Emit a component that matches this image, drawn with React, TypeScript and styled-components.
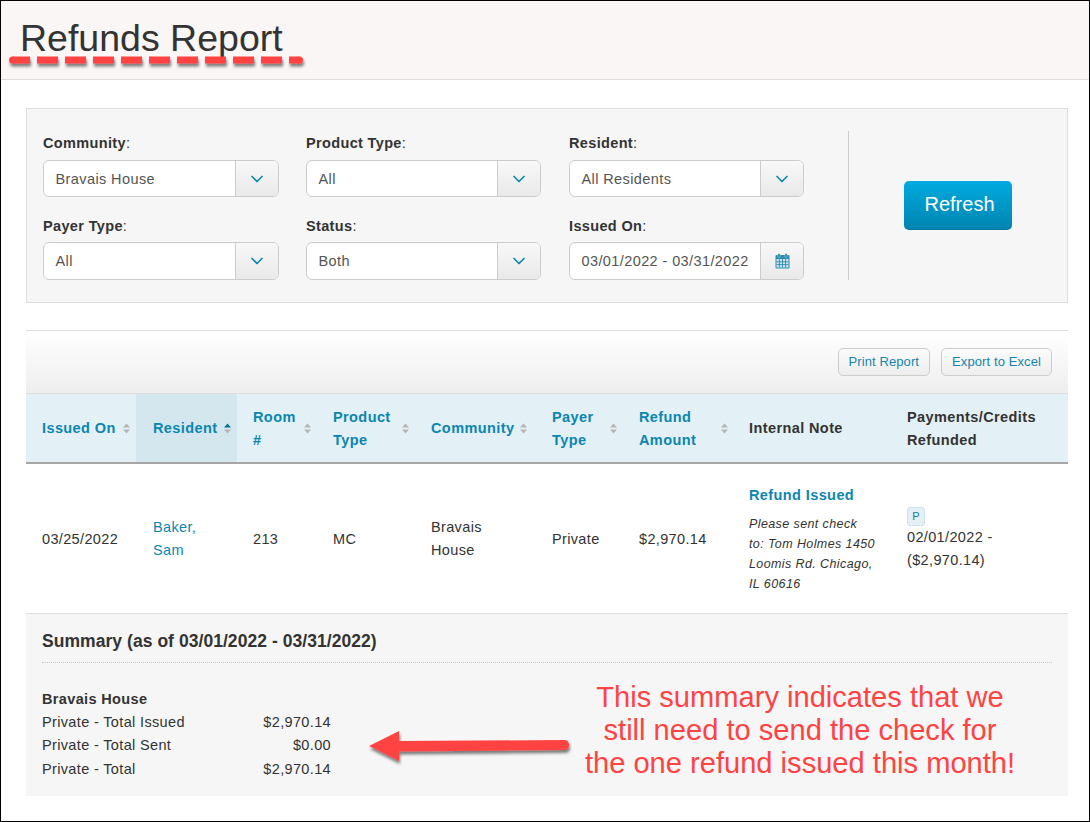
import React from "react";
import styled, { createGlobalStyle } from "styled-components";
import { ChevronDown } from "lucide-react";

const Global = createGlobalStyle`
  html, body { margin: 0; padding: 0; background: #fff; }
  * { box-sizing: border-box; }
`;

const Page = styled.div`
  position: relative;
  width: 1090px;
  height: 822px;
  border: 1px solid #000;
  background: #fff;
  overflow: hidden;
  font-family: "Liberation Sans", Arial, sans-serif;
  font-size: 14.5px;
  letter-spacing: 0.35px;
  color: #333;
`;

const Header = styled.header`
  height: 79px;
  background: #f9f6f5;
  border-bottom: 1px solid #ddd;
  padding: 15px 0 0 19px;
`;

const Title = styled.h1`
  margin: 0;
  font-size: 37.5px;
  line-height: 44px;
  font-weight: 400;
  letter-spacing: 0;
  color: #333;
`;

const Content = styled.main`
  padding: 28px 21px 0 25px;
`;

const FilterPanel = styled.section`
  display: flex;
  height: 195px;
  background: #f6f6f6;
  border: 1px solid #ddd;
  padding: 22px 0 22px 16px;
`;

const FilterGrid = styled.div`
  display: grid;
  grid-template-columns: repeat(3, 235px);
  grid-template-rows: 82px 82px;
  column-gap: 28px;
  width: 805px;
  flex: none;
`;

const Field = styled.div<{ $lower?: boolean }>`
  display: flex;
  flex-direction: column;
  padding-top: ${(p) => (p.$lower ? 1 : 0)}px;
  &:nth-child(3n + 1) {
    margin-right: -1px;
  }
`;

const Label = styled.label<{ $lower?: boolean }>`
  height: ${(p) => (p.$lower ? 28 : 29)}px;
  padding-top: 3px;
  line-height: 18px;
  color: #333;
  b { font-weight: 700; }
`;

const Control = styled.div<{ $lower?: boolean }>`
  display: flex;
  height: ${(p) => (p.$lower ? 38 : 37)}px;
  background: #fff;
  border: 1px solid #ccc;
  border-radius: 6px;
  overflow: hidden;
`;

const ControlValue = styled.span`
  flex: 1;
  padding-left: 11.5px;
  line-height: 36px;
  letter-spacing: 0.4px;
  color: #555;
  white-space: nowrap;
`;

const AddOn = styled.span`
  flex: none;
  width: 43px;
  display: flex;
  align-items: center;
  justify-content: center;
  border-left: 1px solid #ccc;
  background: linear-gradient(#f8f8f8, #e9e9e9);
  color: #0b86b1;
`;

const RefreshZone = styled.div`
  flex: 1;
  display: flex;
  align-items: center;
  justify-content: center;
  border-left: 1px solid #ccc;
`;

const RefreshButton = styled.button`
  width: 108px;
  height: 49px;
  padding: 0 0 2px 3px;
  border: 0;
  border-bottom: 1px solid #00779f;
  border-radius: 5px;
  background: linear-gradient(#00aadf, #0085b1);
  color: #fff;
  font-family: inherit;
  font-size: 20px;
  letter-spacing: 0;
`;

const Report = styled.section`
  margin-top: 27px;
`;

const Toolbar = styled.div`
  display: flex;
  justify-content: flex-end;
  gap: 11px;
  height: 64px;
  padding: 17px 16px 0 0;
  border-top: 1px solid #ddd;
  border-bottom: 1px solid #ddd;
  background: linear-gradient(#fff, #eeeeee);
`;

const ToolButton = styled.button`
  height: 28px;
  padding: 0 10px 2px;
  border: 1px solid #ccc;
  border-radius: 5px;
  background: linear-gradient(#fbfbfb, #eeeeee);
  color: #1585ad;
  font-family: inherit;
  font-size: 13px;
  letter-spacing: 0.1px;
`;

const Table = styled.table`
  width: 1042px;
  table-layout: fixed;
  border-collapse: collapse;
`;

const HeadCell = styled.th<{ $active?: boolean; $plain?: boolean }>`
  height: 69px;
  padding: 1px 0 0 ${(p) => (p.$active ? 17 : 16)}px;
  background: ${(p) => (p.$active ? "#d4e7ef" : "#e3f0f5")};
  border-bottom: 2px solid #a6a6a6;
  text-align: left;
  font-size: 14.5px;
  line-height: 23px;
  font-weight: 700;
  letter-spacing: 0.4px;
  color: ${(p) => (p.$plain ? "#333" : "#0b86b1")};
`;

const HeadInner = styled.div<{ $inset?: number }>`
  display: flex;
  align-items: center;
  justify-content: space-between;
  padding-right: ${(p) => p.$inset ?? 5}px;
`;

const BodyCell = styled.td<{ $indent?: boolean }>`
  height: 150px;
  padding: 2px 10px 0 ${(p) => (p.$indent ? 17 : 16)}px;
  border-bottom: 1px solid #ddd;
  line-height: 23px;
  vertical-align: middle;
`;

const ResidentLink = styled.a`
  color: #0b86b1;
`;

const NoteTitle = styled.div`
  font-weight: 700;
  letter-spacing: 0.4px;
  color: #0b86b1;
  line-height: 20px;
`;

const NoteText = styled.div`
  font-style: italic;
  font-size: 12.5px;
  line-height: 20px;
  margin-top: 9px;
  letter-spacing: 0.4px;
`;

const Badge = styled.span`
  display: block;
  width: 18px;
  height: 19px;
  background: #e3f0f5;
  border: 1px solid #cbe3ea;
  border-radius: 3px;
  text-align: center;
  font-size: 11px;
  line-height: 16px;
  color: #1b7d9f;
  letter-spacing: 0;
`;

const Summary = styled.section`
  height: 182px;
  background: #f6f6f6;
  padding: 15px 16px 0;
`;

const SummaryTitle = styled.h2`
  margin: 0;
  height: 34px;
  border-bottom: 1px dotted #c8c8c8;
  font-size: 17.5px;
  line-height: 24px;
  font-weight: 700;
  letter-spacing: 0.05px;
`;

const SummaryName = styled.div`
  margin-top: 25px;
  font-weight: 700;
  line-height: 23px;
`;

const SummaryRow = styled.div`
  display: flex;
  justify-content: space-between;
  width: 289px;
  line-height: 23.5px;
`;

const Callout = styled.p`
  position: absolute;
  left: 569px;
  top: 680px;
  width: 460px;
  margin: 0;
  text-align: center;
  color: #ff4343;
  font-size: 29.1px;
  line-height: 33px;
  letter-spacing: 0;
`;

const Overlay = styled.svg`
  position: absolute;
  left: -1px;
  top: -1px;
  pointer-events: none;
  overflow: visible;
`;

const SortIcon = ({ active }: { active?: boolean }) => (
  <svg width="9" height="11" viewBox="0 0 9 11" style={{ flex: "none" }}>
    <path d="M4.5 0.5 8 4.4H1z" fill={active ? "#0f6f92" : "#b5b5b5"} />
    <path d="M4.5 10.5 8 6.6H1z" fill="#b5b5b5" />
  </svg>
);

const CalendarIcon = () => (
  <svg width="15" height="16" viewBox="0 0 15 16">
    <rect x="0.5" y="2" width="14" height="13.5" rx="1" fill="#2a8db3" />
    <rect x="1.5" y="6" width="12" height="8.5" fill="#cfe4ec" />
    <path d="M1.5 8.8h12M1.5 11.6h12M4.4 6v8.5M7.5 6v8.5M10.6 6v8.5" stroke="#2a8db3" strokeWidth="0.9" />
    <rect x="3" y="0.5" width="2" height="4" rx="1" fill="#0f6f92" stroke="#e9e9e9" strokeWidth="0.5" />
    <rect x="10" y="0.5" width="2" height="4" rx="1" fill="#0f6f92" stroke="#e9e9e9" strokeWidth="0.5" />
  </svg>
);

const selects = [
  { label: "Community", value: "Bravais House" },
  { label: "Product Type", value: "All" },
  { label: "Resident", value: "All Residents" },
  { label: "Payer Type", value: "All", lower: true },
  { label: "Status", value: "Both", lower: true },
  { label: "Issued On", value: "03/01/2022 - 03/31/2022", date: true, lower: true },
];

const columns: { w: number; t: React.ReactNode; sort?: boolean; active?: boolean; inset?: number }[] = [
  { w: 110, t: "Issued On", sort: true },
  { w: 101, t: "Resident", sort: true, active: true },
  { w: 80, t: <>Room<br />#</>, sort: true },
  { w: 98, t: <>Product<br />Type</>, sort: true },
  { w: 121, t: "Community", sort: true, inset: 8 },
  { w: 87, t: <>Payer<br />Type</>, sort: true },
  { w: 110, t: <>Refund<br />Amount</>, sort: true, inset: 4 },
  { w: 158, t: "Internal Note" },
  { w: 177, t: <>Payments/Credits<br />Refunded</> },
];

export default function App() {
  return (
    <Page>
      <Global />
      <Header>
        <Title>Refunds Report</Title>
      </Header>
      <Content>
        <FilterPanel>
          <FilterGrid>
            {selects.map((s) => (
              <Field key={s.label} $lower={s.lower}>
                <Label $lower={s.lower}>
                  <b>{s.label}</b>:
                </Label>
                <Control $lower={s.lower}>
                  <ControlValue>{s.value}</ControlValue>
                  <AddOn>
                    {s.date ? <CalendarIcon /> : <ChevronDown size={20} strokeWidth={2} />}
                  </AddOn>
                </Control>
              </Field>
            ))}
          </FilterGrid>
          <RefreshZone>
            <RefreshButton>Refresh</RefreshButton>
          </RefreshZone>
        </FilterPanel>
        <Report>
          <Toolbar>
            <ToolButton>Print Report</ToolButton>
            <ToolButton>Export to Excel</ToolButton>
          </Toolbar>
          <Table>
            <colgroup>
              {columns.map((c, i) => (
                <col key={i} style={{ width: c.w }} />
              ))}
            </colgroup>
            <thead>
              <tr>
                {columns.map((c, i) => (
                  <HeadCell key={i} $active={c.active} $plain={!c.sort}>
                    <HeadInner $inset={c.inset}>
                      <span>{c.t}</span>
                      {c.sort && <SortIcon active={c.active} />}
                    </HeadInner>
                  </HeadCell>
                ))}
              </tr>
            </thead>
            <tbody>
              <tr>
                <BodyCell>03/25/2022</BodyCell>
                <BodyCell $indent><ResidentLink>Baker,<br />Sam</ResidentLink></BodyCell>
                <BodyCell>213</BodyCell>
                <BodyCell>MC</BodyCell>
                <BodyCell>Bravais<br />House</BodyCell>
                <BodyCell>Private</BodyCell>
                <BodyCell>$2,970.14</BodyCell>
                <BodyCell>
                  <NoteTitle>Refund Issued</NoteTitle>
                  <NoteText>
                    Please sent check<br />to: Tom Holmes 1450<br />Loomis Rd. Chicago,<br />IL 60616
                  </NoteText>
                </BodyCell>
                <BodyCell>
                  <Badge>P</Badge>
                  02/01/2022 -<br />($2,970.14)
                </BodyCell>
              </tr>
            </tbody>
          </Table>
          <Summary>
            <SummaryTitle>Summary (as of 03/01/2022 - 03/31/2022)</SummaryTitle>
            <SummaryName>Bravais House</SummaryName>
            <SummaryRow><span>Private - Total Issued</span><span>$2,970.14</span></SummaryRow>
            <SummaryRow><span>Private - Total Sent</span><span>$0.00</span></SummaryRow>
            <SummaryRow><span>Private - Total</span><span>$2,970.14</span></SummaryRow>
          </Summary>
        </Report>
      </Content>

      <Overlay width="1090" height="822">
        <defs>
          <filter id="sh" filterUnits="userSpaceOnUse" x="0" y="0" width="1090" height="822">
            <feDropShadow dx="1" dy="3" stdDeviation="1.6" floodColor="#000" floodOpacity="0.5" />
          </filter>
        </defs>
        <g filter="url(#sh)" fill="#ff4343">
          <line x1="12.5" y1="60" x2="299.5" y2="60" stroke="#ff4343" strokeWidth="7" strokeDasharray="21 7" strokeDashoffset="3.5" />
          <circle cx="12.5" cy="60" r="3.5" />
          <circle cx="299.5" cy="60" r="3.5" />
        </g>
        <path d="M369 746 L399 731 L399 741 L564 740 Q569 740 569 745 Q569 750 564 750 L399 751.5 L399 761 Z" fill="#ff4343" filter="url(#sh)" />
      </Overlay>
      <Callout>
        This summary indicates that we<br />still need to send the check for<br />the one refund issued this month!
      </Callout>
    </Page>
  );
}
